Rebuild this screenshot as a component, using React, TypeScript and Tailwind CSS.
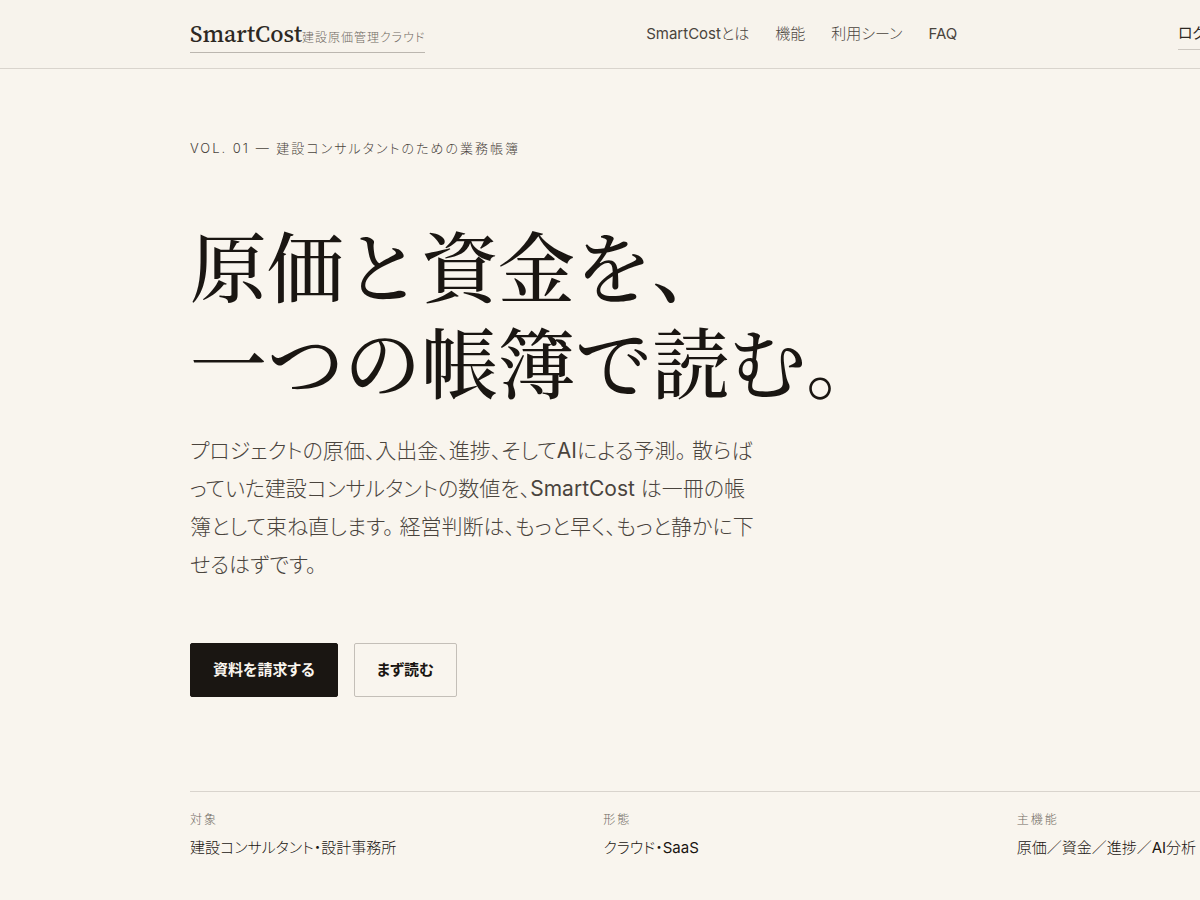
import type { ReactNode } from "react";

function Latin({ children }: { children: ReactNode }) {
  return <span className="font-normal">{children}</span>;
}

const navItems: { label: ReactNode; href: string }[] = [
  {
    label: (
      <>
        <Latin>SmartCost</Latin>とは
      </>
    ),
    href: "#about",
  },
  { label: "機能", href: "#features" },
  { label: "利用シーン", href: "#scenes" },
  { label: <Latin>FAQ</Latin>, href: "#faq" },
];

const facts: { term: string; detail: ReactNode }[] = [
  { term: "対象", detail: "建設コンサルタント・設計事務所" },
  {
    term: "形態",
    detail: (
      <>
        クラウド・<Latin>SaaS</Latin>
      </>
    ),
  },
  {
    term: "主機能",
    detail: (
      <>
        原価／資金／進捗／<Latin>AI</Latin>分析
      </>
    ),
  },
];

const serif =
  "font-['Source_Serif_4','Noto_Serif_CJK_JP','Noto_Serif_JP','Liberation_Serif','Noto_Sans_CJK_JP',serif]";

function Header() {
  return (
    <header className="border-b border-[#d9d4cd] bg-[#f7f3ec]">
      <div className="mx-auto flex h-[68px] w-full max-w-[1220px] items-center justify-between">
        <a href="#top" className="flex items-baseline border-b border-[#bbb6af] pt-[5px] pb-1">
          <span className={`text-[24px] leading-7 font-medium text-[#2d2823] ${serif}`}>
            SmartCost
          </span>
          <span className="text-[12px] leading-4 tracking-[1px] text-[#6f6962]">
            建設原価管理クラウド
          </span>
        </a>
        <nav className="flex gap-[26px] pb-px text-[15px] leading-6 text-[#4a443d]">
          {navItems.map((item) => (
            <a key={item.href} href={item.href}>
              {item.label}
            </a>
          ))}
        </nav>
        <div className="flex w-[232px]">
          <a
            href="#login"
            className="border-b border-[#cdc8c1] pt-[3px] pb-1 text-[15px] leading-6 font-normal text-[#2d2823]"
          >
            ログイン
          </a>
        </div>
      </div>
    </header>
  );
}

function Hero() {
  return (
    <section className="mx-auto w-full max-w-[1220px] pt-[67px]">
      <p className="text-[13px] leading-6 tracking-[2px] text-[#4a443d]">
        VOL. 01 — 建設コンサルタントのための業務帳簿
      </p>
      <h1
        className={`mt-[62px] text-[77px] leading-[96px] font-medium text-[#1a1612] [font-feature-settings:normal] ${serif}`}
      >
        原価と資金を、
        <br />
        一つの帳簿で読む。
      </h1>
      <p className="mt-[18px] w-[572px] text-[21px] leading-[38px] text-[#4a443d]">
        プロジェクトの原価、入出金、進捗、そして<Latin>AI</Latin>による予測。
        散らばっていた建設コンサルタントの数値を、<Latin>SmartCost</Latin>{" "}
        は一冊の帳簿として束ね直します。 経営判断は、もっと早く、もっと静かに下せるはずです。
      </p>
      <div className="mt-[59px] flex gap-4 text-[15px] leading-6 font-bold">
        <button
          type="button"
          className="rounded-xs border border-[#1a1612] bg-[#1a1612] px-[22px] py-[14px] text-[#f9f5ee]"
        >
          資料を請求する
        </button>
        <button
          type="button"
          className="rounded-xs border border-[#c4bfb8] px-[22px] py-[14px] text-[#1a1612]"
        >
          まず読む
        </button>
      </div>
      <dl className="mt-[94px] grid grid-cols-3 gap-5 border-t border-[#d9d4cd] pt-4 pb-10">
        {facts.map((fact) => (
          <div key={fact.term}>
            <dt className="text-[12px] leading-6 tracking-[2px] text-[#6f6962]">{fact.term}</dt>
            <dd className="mt-1 text-[15px] leading-6 text-[#1a1612]">{fact.detail}</dd>
          </div>
        ))}
      </dl>
    </section>
  );
}

export default function App() {
  return (
    <div
      id="top"
      lang="ja"
      className="min-h-screen overflow-x-hidden bg-[#f9f5ee] font-['Inter','Noto_Sans_CJK_JP',sans-serif] font-light [font-feature-settings:'palt']"
    >
      <div className="min-w-[1600px]">
        <Header />
        <main>
          <Hero />
        </main>
      </div>
    </div>
  );
}
